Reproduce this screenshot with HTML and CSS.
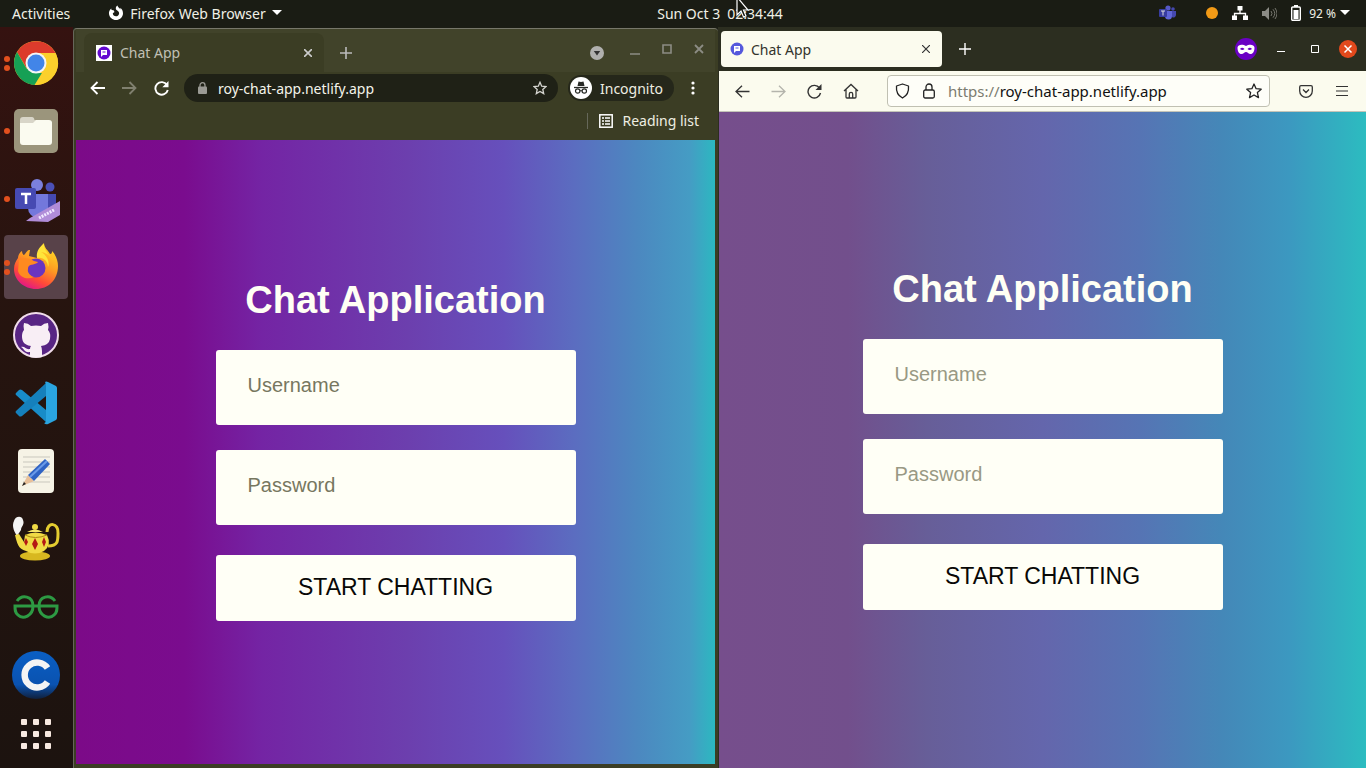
FILE: index.html
```html
<!DOCTYPE html>
<html lang="en">
<head>
<meta charset="utf-8">
<title>Chat App</title>
<link rel="stylesheet" href="styles.css">
</head>
<body>
<div class="desktop">
  <header class="topbar">
    <div class="topbar-left">
      <button class="bar-btn">Activities</button>
      <button class="bar-btn app-menu">
        <svg width="16" height="16" viewBox="0 0 16 16"><path d="M3.2 3.6C1.500 5 .7 7 1 9c.5 3.600 3.500 6 7 6s7-2.700 7-6.500c0-2.500-1-4.500-3-5.700.4.8.5 1.200.4 1.800C11.300 2.800 9.800 2.300 9.400.6 8 1.500 7.500 3 8 4.600l2.200 1.600C11 7 11.300 8 11 9c-.4 1.400-1.600 2.300-3 2.300-1.800 0-3.200-1.400-3.200-3.100L6.500 7 5.600 5.300 3.600 5z" fill="#fff"/></svg>
        <span>Firefox Web Browser</span>
        <svg width="10" height="6" viewBox="0 0 10 6"><path d="M0 0h10L5 5z" fill="#fff"/></svg>
      </button>
    </div>
    <time class="clock">Sun Oct 3&ensp;02:34:44</time>
    <div class="topbar-right">
      <svg class="tray-teams" width="17" height="16" viewBox="0 0 17 16"><circle cx="9" cy="3" r="2.600" fill="#5558c8"/><circle cx="14" cy="4" r="1.800" fill="#4548b0"/><path d="M6 6h7v5a3.500 3.500 0 0 1-7 0z" fill="#6066d8"/><path d="M13 6h4v4a2.500 2.500 0 0 1-4 2z" fill="#4548b0"/><rect y="4" width="8" height="8" rx="1" fill="#383ca0"/><path d="M2 6h4M4 6v4.500" stroke="#ddd" fill="none"/></svg>
      <svg class="tray-dot" width="12" height="12" viewBox="0 0 12 12"><circle cx="6" cy="6" r="6" fill="#f29a16"/></svg>
      <svg class="tray-net" width="16" height="14" viewBox="0 0 16 14"><path d="M8 3v5M2.500 11V7.500h11V11" stroke="#fff" stroke-width="1.300" fill="none"/><path d="M5.500 0h5v4.500h-5zM0 9.500h5V14H0zM11 9.500h5V14h-5z" fill="#fff"/></svg>
      <svg class="tray-vol" width="15" height="13" viewBox="0 0 15 13"><path d="M0 4h3l4-4v13L3 9H0z" fill="#8c8c86"/><path d="M9 4q2 2.500 0 5M11 2.300q3.500 4.200 0 8.400M13 1q4 5.500 0 11" stroke="#77776f" fill="none"/></svg>
      <svg class="tray-bat" width="10" height="16" viewBox="0 0 10 16"><path d="M3 0h4v2H3z" fill="#fff"/><rect x=".7" y="2" width="8.600" height="13.300" rx="1" fill="none" stroke="#fff" stroke-width="1.400"/><path d="M2.500 5h5v9h-5z" fill="#fff"/></svg>
      <span class="battery">92 %</span>
      <svg width="10" height="6" viewBox="0 0 10 6"><path d="M0 0h10L5 5z" fill="#fff"/></svg>
    </div>
  </header>

  <nav class="dock" aria-label="Dock">
    <button class="dock-item" aria-label="Chrome"><i class="dots two"></i>
      <svg width="46" height="46" viewBox="0 0 46 46"><circle cx="23" cy="23" r="22" fill="#fc3"/><path d="M4 12A22 22 0 0 1 42.500 13H23L13.500 28z" fill="#dc3b2c"/><path d="M4 12l9.500 16.500L23 33h9L22 45A22 22 0 0 1 4 12z" fill="#16a055"/><path d="M23 13h19.500A22 22 0 0 1 21.500 45L32 28z" fill="#fbd02c"/><circle cx="23" cy="23" r="10.500" fill="#f5f5f5"/><circle cx="23" cy="23" r="8.500" fill="#4285e8"/></svg></button>
    <button class="dock-item" aria-label="Files"><i class="dots"></i>
      <svg width="46" height="46" viewBox="0 0 46 46"><rect x="1" y="1" width="44" height="44" rx="5" fill="#9b957c"/><path d="M7 12q0-3 3-3h9q2 0 2.500 3L39 14v8H7z" fill="#d8d5c8"/><path d="M7 15h13l3-3h13q3 0 3 3v19q0 3-3 3H10q-3 0-3-3z" fill="#fbfbf0"/></svg></button>
    <button class="dock-item" aria-label="Teams"><i class="dots"></i>
      <svg width="48" height="46" viewBox="0 0 48 46"><circle cx="25" cy="9" r="6" fill="#7b80dc"/><circle cx="38" cy="11" r="4.500" fill="#4b50b8"/><path d="M34 18h10v12q-2 7-9 5z" fill="#4549b0"/><path d="M16 18h20v14a10 10 0 0 1-20 0z" fill="#7378dc"/><rect x="3" y="12" width="21" height="21" rx="2" fill="#464ab2"/><path d="M9 18h10M14 18v10" stroke="#fff" stroke-width="2.500"/><path d="M14 45l4-3 30-17v14L36 46z" fill="#b08cd8"/><path d="M27 42l15-8" stroke="#f0e8ff" stroke-width="3" stroke-dasharray="2 1"/></svg></button>
    <button class="dock-item active" aria-label="Firefox"><i class="dots two"></i>
      <svg width="48" height="48" viewBox="0 0 48 48"><defs><linearGradient id="ff" x1=".8" y1="0" x2=".3" y2="1"><stop offset="0" stop-color="#ffe226"/><stop offset=".45" stop-color="#ff9a22"/><stop offset=".75" stop-color="#ff4a38"/><stop offset="1" stop-color="#e0148c"/></linearGradient></defs><path d="M6 15c0-3 2-6 4-7 0 2 1 4 2 4 3-3 3-5 6-5l-1 6 8 2 2-7c1-4 3-6 5-8 0 5 4 7 6 11 2 0 2-2 2-3 4 4 6 10 6 15 0 14-10 23-22 23S2 37 2 26c0-5 2-8 4-11z" fill="url(#ff)"/><circle cx="24" cy="25" r="9.500" fill="#6a35c0"/><path d="M7 17c5-3 11-2 15 1l4 1c-2 3-8 2-9 4-1 1-1 2-1 3-1 3 2 7 6 8-6 3-14 1-16-6z" fill="#ff8a20"/><path d="M25 15c7-1 11 4 11 9 2-5-1-12-7-15 6 1 10 4 12 9-3-7-9-9-9-17-5 3-8 8-7 14z" fill="#ffe53a"/></svg></button>
    <button class="dock-item" aria-label="GitHub">
      <svg width="46" height="46" viewBox="0 0 46 46"><circle cx="23" cy="23" r="22" fill="#582584" stroke="#f0dcea" stroke-width="2"/><path d="M11 11q4 0 7 3 5-1 10 0 3-3 7-3 1 4 0 7 3 3 2 9-1 6-9 7 1 2 1 5v6q-6 1-12 0v-5c-6 1-6-4-9-5 4-1 5 3 9 2 0-2 1-3 1-3-8-1-9-6-9-10 0-3 1-5 2-6q-1-4 0-7z" fill="#f8eef5"/></svg></button>
    <button class="dock-item" aria-label="Visual Studio Code">
      <svg width="44" height="44" viewBox="0 0 44 44"><path d="M2 14q-1-1 0-2l3-3q1-1 3 0l24 20v12z" fill="#188cc8"/><path d="M2 30q-1 1 0 2l3 3q1 1 3 0l24-20V2z" fill="#1580bc"/><path d="M31 1q1-1 3 0l8 4q1 1 1 2v30q0 1-1 2l-8 4q-2 1-4-1 2 0 2-3V5q0-3-1-4z" fill="#2aa4e0"/></svg></button>
    <button class="dock-item" aria-label="Text Editor">
      <svg width="38" height="46" viewBox="0 0 38 46"><rect x="1" y="1" width="36" height="44" rx="4" fill="#f6f3e6"/><path d="M6 9h27M6 14h27M6 19h27M6 24h27M6 29h27M6 34h27" stroke="#c9c7bd"/><path d="M5 38l6-11 6 6z" fill="#e8c09a"/><path d="M5 38l2-4 2 2z" fill="#222"/><path d="M11 27l17-16 5 5-16 17z" fill="#2f63c4"/><path d="M13 29l17-16" stroke="#6a9ae8" stroke-width="2"/></svg></button>
    <button class="dock-item" aria-label="Teapot">
      <svg width="50" height="48" viewBox="0 0 50 48"><path d="M6 21C2 15 1 10 3 6c1-5 8-6 9-1 2 5-2 6-2 10z" fill="#f4f4f4"/><path d="M36 17C36 6 48 8 47 18c0 8 0 13-10 13" fill="none" stroke="#e4cc30" stroke-width="3"/><ellipse cx="24" cy="41" rx="15" ry="4.500" fill="#d8b820"/><path d="M4 20l4-1 5 8 1-7q10-5 22 0 5 10-3 16-9 5-18 0C7 34 6 28 4 20z" fill="#f0da45"/><path d="M14 20q10 5 22 0" stroke="#a88812" fill="none"/><path d="M16 17q8-5 16 0z" fill="#f7e668"/><circle cx="24" cy="12" r="3" fill="#f0da45"/><path d="M24 23l3 6-3 6-3-6zM15 23l2 4-2 4-2-4zM33 22l2 5-2 5-2-5z" fill="#b41814"/></svg></button>
    <button class="dock-item" aria-label="GeeksforGeeks">
      <svg width="46" height="26" viewBox="0 0 46 26"><path d="M4 7C9 0 20 2 20 12 20 22 10 26 5 21 2 19 2 16 2 12H44C44 16 44 19 41 21 36 26 26 22 26 12 26 2 37 0 42 7" stroke="#2d9a43" stroke-width="3" fill="none"/></svg></button>
    <button class="dock-item" aria-label="C editor">
      <svg width="48" height="48" viewBox="0 0 48 48"><defs><linearGradient id="cb" x2="0" y2="1"><stop offset="0" stop-color="#0a5fc4"/><stop offset=".7" stop-color="#0a52b0"/><stop offset="1" stop-color="#10203c"/></linearGradient></defs><circle cx="24" cy="24" r="24" fill="url(#cb)"/><path d="M35.500 17A12.500 12.500 0 1 0 35.500 31" fill="none" stroke="#f4f4f4" stroke-width="6.500"/></svg></button>
    <button class="dock-item apps" aria-label="Show applications">
      <svg width="30" height="30" viewBox="0 0 30 30" fill="#f7e9e0"><rect width="6" height="6" rx="1"/><rect x="12" width="6" height="6" rx="1"/><rect x="24" width="6" height="6" rx="1"/><rect y="12" width="6" height="6" rx="1"/><rect x="12" y="12" width="6" height="6" rx="1"/><rect x="24" y="12" width="6" height="6" rx="1"/><rect y="24" width="6" height="6" rx="1"/><rect x="12" y="24" width="6" height="6" rx="1"/><rect x="24" y="24" width="6" height="6" rx="1"/></svg></button>
  </nav>

  <section class="window chrome">
    <div class="c-tabs">
      <div class="c-tab">
        <svg width="16" height="16" viewBox="0 0 16 16"><path d="M0 0h16v16H0z" fill="#fff"/><circle cx="8" cy="8" r="6.500" fill="#6408d0"/><path d="M5 5h6v5H7l-2 2z" fill="#fff"/><path d="M6.500 7h3" stroke="#6408d0"/></svg>
        <span class="tab-title">Chat App</span>
        <button aria-label="Close tab"><svg width="8" height="8" viewBox="0 0 8 8"><path d="M0 0l8 8M8 0L0 8" stroke="#ccc" stroke-width="1.600"/></svg></button>
      </div>
      <button class="c-new" aria-label="New tab"><svg width="12" height="12" viewBox="0 0 12 12"><path d="M6 0v12M0 6h12" stroke="#bbb" stroke-width="1.600"/></svg></button>
      <div class="c-controls">
        <button class="tab-search" aria-label="Tab search"><svg width="14" height="14" viewBox="0 0 14 14"><circle cx="7" cy="7" r="7" fill="#b0b0ae"/><path d="M3.800 5h6.400L7 9.500z" fill="#333"/></svg></button>
        <button class="raised" aria-label="Minimize"><svg width="10" height="11" viewBox="0 0 10 11"><path d="M0 10h10" stroke="#8c8c84" stroke-width="1.500"/></svg></button>
        <button class="raised" aria-label="Maximize"><svg width="10" height="10" viewBox="0 0 10 10"><path d="M1 1h8v8H1z" stroke="#8c8c84" stroke-width="1.600" fill="none"/></svg></button>
        <button class="raised" aria-label="Close"><svg width="10" height="10" viewBox="0 0 10 10"><path d="M1 1l8 8M9 1L1 9" stroke="#8c8c84" stroke-width="1.800"/></svg></button>
      </div>
    </div>
    <div class="c-toolbar">
      <button aria-label="Back"><svg width="15" height="14" viewBox="0 0 15 14"><path d="M15 7H1.500M7.500 1l-6 6 6 6" stroke="#fff" stroke-width="1.800" fill="none"/></svg></button>
      <button aria-label="Forward"><svg width="15" height="14" viewBox="0 0 15 14"><path d="M0 7h13.500M7.500 1l6 6-6 6" stroke="#80806f" stroke-width="1.800" fill="none"/></svg></button>
      <button aria-label="Reload"><svg width="15" height="15" viewBox="0 0 15 15"><path d="M13 4A6.300 6.300 0 1 0 13.800 9" stroke="#fff" stroke-width="1.900" fill="none"/><path d="M14.500 0v6.300H8.300z" fill="#fff"/></svg></button>
      <div class="c-address">
        <svg width="9" height="12" viewBox="0 0 9 12"><rect y="4.500" width="9" height="7.500" rx="1" fill="#9a9a94"/><path d="M2 5V3.200a2.500 2.500 0 0 1 5 0V5" stroke="#9a9a94" stroke-width="1.300" fill="none"/></svg>
        <input type="text" aria-label="Address" value="roy-chat-app.netlify.app">
        <button aria-label="Bookmark"><svg width="14" height="14" viewBox="0 0 14 14"><path d="M7 1.300l1.700 3.900 4.300.4-3.200 2.800.9 4.200L7 10.400l-3.700 2.200.9-4.200L1 5.600l4.300-.4z" stroke="#d5d5d0" stroke-width="1.300" fill="none"/></svg></button>
      </div>
      <button class="incognito">
        <svg width="22" height="22" viewBox="0 0 22 22"><circle cx="11" cy="11" r="11" fill="#fff"/><path d="M7.500 9l1-4.500 2.500.6 2.500-.6 1 4.500z" fill="#282a26"/><path d="M4 10.500h14" stroke="#282a26" stroke-width="1.300"/><circle cx="7.700" cy="14" r="2.200" stroke="#282a26" fill="none" stroke-width="1.200"/><circle cx="14.300" cy="14" r="2.200" stroke="#282a26" fill="none" stroke-width="1.200"/><path d="M10 14q1-1 2 0" stroke="#282a26" fill="none"/></svg>
        <span>Incognito</span>
      </button>
      <button class="kebab" aria-label="Menu"><svg width="4" height="14" viewBox="0 0 4 14" fill="#fff"><circle cx="2" cy="2" r="1.600"/><circle cx="2" cy="7" r="1.600"/><circle cx="2" cy="12" r="1.600"/></svg></button>
    </div>
    <div class="c-bookmarks">
      <button class="reading">
        <svg width="14" height="14" viewBox="0 0 14 14"><rect x=".8" y=".8" width="12.400" height="12.400" stroke="#fff" stroke-width="1.500" fill="none"/><path d="M3 4h2M3 7h2M3 10h2M6 4h5M6 7h5M6 10h5" stroke="#fff" stroke-width="1.400"/></svg>
        <span>Reading list</span>
      </button>
    </div>
    <main class="page page-violet">
      <form class="login">
        <h1>Chat Application</h1>
        <input type="text" aria-label="Username" placeholder="Username">
        <input type="password" aria-label="Password" placeholder="Password">
        <button type="button">START CHATTING</button>
      </form>
    </main>
  </section>

  <section class="window firefox">
    <div class="f-tabs">
      <div class="f-tab">
        <svg width="14" height="14" viewBox="0 0 14 14"><circle cx="7" cy="7" r="6.500" fill="#5558dc"/><path d="M4 4h6v5H6l-2 2z" fill="#fff"/><path d="M5.500 6h3" stroke="#5558dc"/></svg>
        <span class="tab-title">Chat App</span>
        <button aria-label="Close tab"><svg width="8" height="8" viewBox="0 0 8 8"><path d="M0 0l8 8M8 0L0 8" stroke="#333" stroke-width="1.200"/></svg></button>
      </div>
      <button class="f-new" aria-label="New tab"><svg width="12" height="12" viewBox="0 0 12 12"><path d="M6 0v12M0 6h12" stroke="#fff" stroke-width="1.400"/></svg></button>
      <div class="f-controls">
        <svg class="mask" width="22" height="22" viewBox="0 0 22 22"><circle cx="11" cy="11" r="11" fill="#6a00c4"/><path d="M2.500 9.500C3 6 8 6 11 8c3-2 8-2 8.500 1.500 0 4-1.500 6.500-4 6.500-2 0-3-2-4.500-2s-2.500 2-4.500 2c-2.500 0-4-2.500-4-6.500z" fill="#fff"/><path d="M5 11q2-2.500 4.500 0-2 2-4.500 0zM12.500 11q2.500-2.500 4.500 0-2.500 2-4.500 0z" fill="#6a00c4"/></svg>
        <button aria-label="Minimize"><svg width="8" height="8" viewBox="0 0 8 8"><path d="M0 6.500h8" stroke="#fff"/></svg></button>
        <button aria-label="Maximize"><svg width="8" height="8" viewBox="0 0 8 8"><path d="M.5.500h7v7h-7z" stroke="#fff" fill="none"/></svg></button>
        <button class="close" aria-label="Close"><svg width="18" height="18" viewBox="0 0 18 18"><circle cx="9" cy="9" r="9" fill="#e2491c"/><path d="M5.500 5.500l7 7M12.500 5.500l-7 7" stroke="#fff" stroke-width="1.500"/></svg></button>
      </div>
    </div>
    <div class="f-toolbar">
      <button aria-label="Back"><svg width="15" height="13" viewBox="0 0 15 13"><path d="M14.500 6.500H1M7 .7L1 6.500l6 5.800" stroke="#333" stroke-width="1.300" fill="none"/></svg></button>
      <button aria-label="Forward"><svg width="15" height="13" viewBox="0 0 15 13"><path d="M.5 6.500H14M8 .7l6 5.800-6 5.800" stroke="#b4b4ac" stroke-width="1.300" fill="none"/></svg></button>
      <button aria-label="Reload"><svg width="15" height="15" viewBox="0 0 15 15"><path d="M12.500 4A6.300 6.300 0 1 0 13.500 9" stroke="#333" stroke-width="1.400" fill="none"/><path d="M14.500 0v6H8.500z" fill="#333"/></svg></button>
      <button aria-label="Home"><svg width="16" height="16" viewBox="0 0 16 16"><path d="M1 8l7-6.500L15 8M3 6.500V14q0 1 1 1h8q1 0 1-1V6.500M6.300 15v-4q0-1.700 1.700-1.700t1.700 1.700v4" stroke="#333" stroke-width="1.300" fill="none"/></svg></button>
      <div class="f-address">
        <svg width="15" height="16" viewBox="0 0 15 16"><path d="M7.500 1l6 2q.8 8.500-6 12Q.7 11.500 1.500 3z" stroke="#222" stroke-width="1.300" fill="none" stroke-linejoin="round"/></svg>
        <svg width="12" height="16" viewBox="0 0 12 16"><rect x=".7" y="7" width="10.600" height="8" rx="1.500" stroke="#222" stroke-width="1.300" fill="none"/><path d="M3 7V4a3 3 0 0 1 6 0v3" stroke="#222" stroke-width="1.300" fill="none"/></svg>
        <div class="f-url" role="textbox" aria-label="Address" tabindex="0"><span class="scheme">https://</span>roy-chat-app.netlify.app</div>
        <button aria-label="Bookmark"><svg width="16" height="16" viewBox="0 0 16 16"><path d="M8 1l2.100 4.700 5.100.5-3.800 3.400 1.100 5L8 12l-4.500 2.600 1.100-5L.8 6.200l5.100-.5z" stroke="#222" stroke-width="1.300" fill="none" stroke-linejoin="round"/></svg></button>
      </div>
      <button class="pocket" aria-label="Pocket"><svg width="14" height="13" viewBox="0 0 14 13"><path d="M2 .7h10q1.300 0 1.300 1.300v4a6.300 6.300 0 0 1-12.600 0V2Q.7.700 2 .7zM4 4.500l3 3 3-3" stroke="#333" stroke-width="1.300" fill="none"/></svg></button>
      <button class="burger" aria-label="Menu"><svg width="12" height="10" viewBox="0 0 12 10"><path d="M0 .5h12M0 5h12M0 9.500h12" stroke="#333" stroke-width="1.200"/></svg></button>
    </div>
    <main class="page page-blue">
      <form class="login">
        <h1>Chat Application</h1>
        <input type="text" aria-label="Username" placeholder="Username">
        <input type="password" aria-label="Password" placeholder="Password">
        <button type="button">START CHATTING</button>
      </form>
    </main>
  </section>

  <svg class="pointer" width="13" height="19" viewBox="0 0 13 19"><path d="M1-3v18l4-4 2.500 6 2.500-1-2.500-6H12z" fill="#15170f" stroke="#fff" stroke-width="1.200"/></svg>
</div>
</body>
</html>
```

FILE: styles.css
```css
* {
  box-sizing: border-box;
}

body {
  margin: 0;
  font-family: "Noto Sans", sans-serif;
  font-size: 14px;
}

button {
  display: flex;
  align-items: center;
  padding: 0;
  border: 0;
  background: none;
  color: inherit;
  font: inherit;
}

svg {
  display: block;
  flex: none;
}

.desktop {
  position: relative;
  display: grid;
  grid-template-columns: 73px 645fr 648fr;
  grid-template-rows: 27px 1fr;
  min-height: 100vh;
  background: #1b1d14;
}

/* Top bar */
.topbar {
  grid-column: 1 / -1;
  display: grid;
  grid-template-columns: 645fr auto 567fr;
  align-items: center;
  padding: 0 16px 1px 12px;
  background: #1a1c14;
  color: #f0f0e6;
}

.topbar-left,
.app-menu,
.topbar-right {
  display: flex;
  align-items: center;
}

.topbar-left {
  gap: 38px;
}

.app-menu {
  gap: 6px;
}

.topbar-right {
  justify-content: flex-end;
}

.tray-teams {
  margin-right: 30px;
}

.tray-dot,
.tray-net,
.tray-vol {
  margin-right: 14px;
}

.tray-bat {
  margin-right: 8px;
}

.battery {
  margin-right: 4px;
  font-size: 12px;
}

.pointer {
  position: absolute;
  top: 0;
  left: 736px;
}

/* Dock */
.dock {
  display: flex;
  flex-direction: column;
  gap: 4px;
  padding: 4px 5px 0 4px;
  background: linear-gradient(#351210, #27140f 35%, #1c130f);
}

.dock-item {
  position: relative;
  justify-content: center;
  height: 64px;
  border-radius: 4px;
}

.dock-item.active {
  background: #584249;
}

.dock-item.apps {
  height: 46px;
}

.dots {
  position: absolute;
  top: 29px;
  left: 0;
  width: 6px;
  height: 6px;
  border-radius: 3px;
  background: #e2501e;
}

.dots.two {
  top: 25px;
  box-shadow: 0 9px #e2501e;
}

/* Windows */
.window {
  display: flex;
  flex-direction: column;
  min-width: 0;
}

.chrome {
  margin-top: 1px;
  padding: 0 3px 4px 2px;
  border-top: 1px solid #77776a;
  border-left: 1px solid #66665a;
  border-radius: 4px 4px 0 0;
  background: #3b3d24;
  color: #eeeee2;
}

.c-tabs {
  display: flex;
  align-items: center;
  height: 43px;
  padding: 4px 11px 0 8px;
  background: #41432a;
}

.c-tab {
  display: flex;
  align-items: center;
  gap: 8px;
  width: 240px;
  height: 39px;
  padding: 0 12px;
  border-radius: 8px 8px 0 0;
  background: #3b3d24;
  color: #c0c0b4;
}

.tab-title {
  flex: 1;
}

.c-new {
  margin-left: 16px;
}

.c-controls {
  display: flex;
  align-items: center;
  gap: 22px;
  margin-left: auto;
}

.c-controls button {
  height: 18px;
}

.tab-search {
  margin-right: 4px;
}

.c-controls .raised {
  align-items: flex-start;
}

.c-toolbar {
  display: flex;
  align-items: center;
  height: 32px;
  padding: 0 20px 0 14px;
  gap: 17px;
}

.c-address {
  display: flex;
  flex: 1;
  align-items: center;
  gap: 11px;
  min-width: 0;
  height: 28px;
  margin: 0 -7px 0 -2px;
  padding: 0 11px 0 14px;
  border-radius: 14px;
  background: #1f2116;
}

.c-address input {
  flex: 1;
  min-width: 0;
  padding: 0;
  border: 0;
  background: none;
  color: #f4f4ea;
  font: inherit;
}

.incognito {
  gap: 8px;
  height: 26px;
  padding: 0 11px 0 2px;
  border-radius: 13px;
  background: #25271a;
}

.c-bookmarks {
  display: flex;
  align-items: center;
  justify-content: flex-end;
  height: 36px;
  padding: 0 16px 3px 0;
}

.reading {
  gap: 9px;
  height: 16px;
  padding-left: 11px;
  border-left: 1px solid #66685a;
}

.firefox {
  padding-left: 1px;
  background: #2c2e20;
}

.f-tabs {
  display: flex;
  align-items: center;
  height: 44px;
  padding: 0 9px 0 2px;
  color: #fff;
}

.f-tab {
  display: flex;
  align-items: center;
  gap: 7px;
  width: 221px;
  height: 36px;
  padding: 0 12px 0 9px;
  border-radius: 4px;
  background: #fbfbee;
  color: #33332c;
}

.f-new {
  margin-left: 17px;
}

.f-controls {
  display: flex;
  align-items: center;
  gap: 26px;
  margin-left: auto;
}

.mask {
  margin-right: -6px;
}

.close {
  margin-left: -6px;
}

.f-toolbar {
  display: flex;
  align-items: center;
  gap: 21px;
  height: 41px;
  padding: 0 18px 0 16px;
  border-bottom: 1px solid #c4c4b8;
  background: #fbfbee;
}

.f-address {
  display: flex;
  flex: 1;
  align-items: center;
  gap: 13px;
  min-width: 0;
  height: 32px;
  margin: 0 8px 0 7px;
  padding: 0 7px;
  border: 1px solid #c0c0b2;
  border-radius: 4px;
  background: #fefef8;
}

.f-url {
  flex: 1;
  color: #111;
  font-size: 15px;
}

.scheme {
  color: #7c7c70;
}

.pocket {
  margin-right: 2px;
}

/* Chat page */
.page {
  display: flex;
  flex: 1;
  align-items: center;
  justify-content: center;
}

.page-violet {
  padding-bottom: 5px;
  background: linear-gradient(90deg, #7c0a88 0%, #7a0c8e 17%, #7424a4 29%, #6c3fae 52%, #6650bc 67%, #5b6dc0 78%, #4c88c0 88%, #459cc4 96%, #2cb8c0 100%);
}

.page-blue {
  padding-bottom: 3px;
  background: linear-gradient(90deg, #764e8c 0%, #724f8c 20%, #675e98 32%, #6466ac 50%, #5674b4 65%, #4488b8 78%, #3c98c0 88%, #2cbcc0 100%);
}

.login {
  display: flex;
  flex-direction: column;
  width: 360px;
  font-family: "Liberation Sans", Arial, sans-serif;
}

.login h1 {
  margin: 0 0 29px;
  color: #fffff4;
  font-size: 38px;
  line-height: 42px;
  text-align: center;
}

.login input {
  height: 75px;
  margin: 0 0 25px;
  padding: 0 32px 4px;
  border: 0;
  border-radius: 3px;
  background: #fffff6;
  font-family: inherit;
  font-size: 20px;
}

.login input::placeholder {
  color: #77775f;
}

.page-blue input::placeholder {
  color: #999984;
}

.login button {
  justify-content: center;
  height: 66px;
  margin-top: 5px;
  border-radius: 3px;
  background: #fffff6;
  color: #080806;
  font-size: 23px;
}
```
